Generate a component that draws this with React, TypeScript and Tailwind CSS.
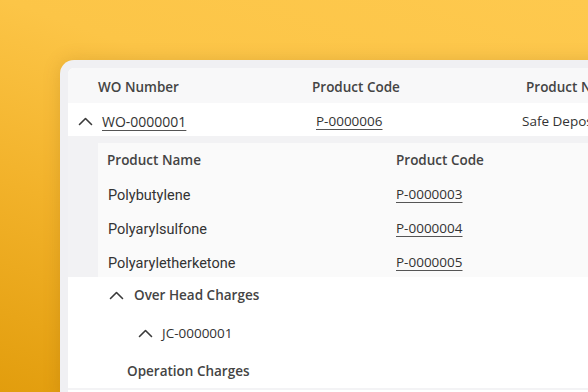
const Chevron = ({ className }: { className?: string }) => (
	<svg width="15" height="9" viewBox="0 0 15 9" className={`shrink-0 ${className ?? ""}`}>
		<polyline points="1.5,7.5 7.5,1.5 13.5,7.5" fill="none" stroke="#3a3a3a" strokeWidth="1.6" strokeLinecap="round" strokeLinejoin="round" />
	</svg>
);

const PRODUCTS = [
	{ name: "Polybutylene", code: "P-0000003" },
	{ name: "Polyarylsulfone", code: "P-0000004" },
	{ name: "Polyaryletherketone", code: "P-0000005" },
];

const ui = "font-['Open_Sans',sans-serif]";
const body = "font-['Roboto',sans-serif]";
const link = "underline decoration-[#555] underline-offset-[3px]";

export default function App() {
	return (
		<div className="w-[588px] h-[392px] overflow-hidden bg-[linear-gradient(200deg,#fec94e_0%,#fcc547_35%,#f2b22a_65%,#e29d0d_100%)] pt-[60px] pl-[60px]">
			<div className="w-[640px] h-[340px] rounded-tl-[14px] bg-[#f0f0f3] pt-[8px] pl-[8px] shadow-[0_0_18px_rgba(120,70,0,0.18)]">
				<div className={`h-full rounded-tl-[6px] bg-white text-[13.5px] ${ui}`}>
					{/* header */}
					<div className="flex h-[35px] items-center rounded-tl-[6px] bg-[#f8f8f9] pt-[3px] font-semibold text-[#444]">
						<div className="w-[244px] shrink-0 pl-[30px]">WO Number</div>
						<div className="w-[214px] shrink-0">Product Code</div>
						<div className="shrink-0 whitespace-nowrap">Product Name</div>
					</div>

					{/* work order row */}
					<div className="flex h-[33px] items-center pt-[3px] text-[#333]">
						<div className="flex w-[248px] shrink-0 items-center gap-[9px] pl-[10px]">
							<Chevron />
							<span className={`text-[14px] ${link}`}>WO-0000001</span>
						</div>
						<div className="w-[206px] shrink-0">
							<span className={link}>P-0000006</span>
						</div>
						<div className="shrink-0 whitespace-nowrap">Safe Deposit Box</div>
					</div>

					{/* nested products */}
					<div className="flex h-[141px] bg-[#f2f2f4] pt-[7px] pl-[30px]">
						<div className="flex-1 bg-[#fafafa]">
							<div className="flex h-[34px] items-center font-semibold text-[#444]">
								<div className="w-[298px] shrink-0 pl-[9px]">Product Name</div>
								<div>Product Code</div>
							</div>
							{PRODUCTS.map((p, i) => (
								<div key={i} className="flex h-[34px] items-center">
									<div className={`w-[298px] shrink-0 pl-[10px] pt-[3px] text-[14.5px] text-[#333] ${body}`}>{p.name}</div>
									<div className="text-[#333]">
										<span className={link}>{p.code}</span>
									</div>
								</div>
							))}
						</div>
					</div>

					{/* charges */}
					<div className="border-b-2 border-[#f3f3f5] font-semibold text-[#444]">
						<div className="flex h-[36px] items-center gap-[10px] pl-[41px]">
							<Chevron />
							<span>Over Head Charges</span>
						</div>
						<div className="flex h-[40px] items-center gap-[9px] pl-[70px] font-normal text-[#333]">
							<Chevron />
							<span>JC-0000001</span>
						</div>
						<div className="flex h-[35px] items-center pl-[59px] pt-[2px]">Operation Charges</div>
					</div>
				</div>
			</div>
		</div>
	);
}
